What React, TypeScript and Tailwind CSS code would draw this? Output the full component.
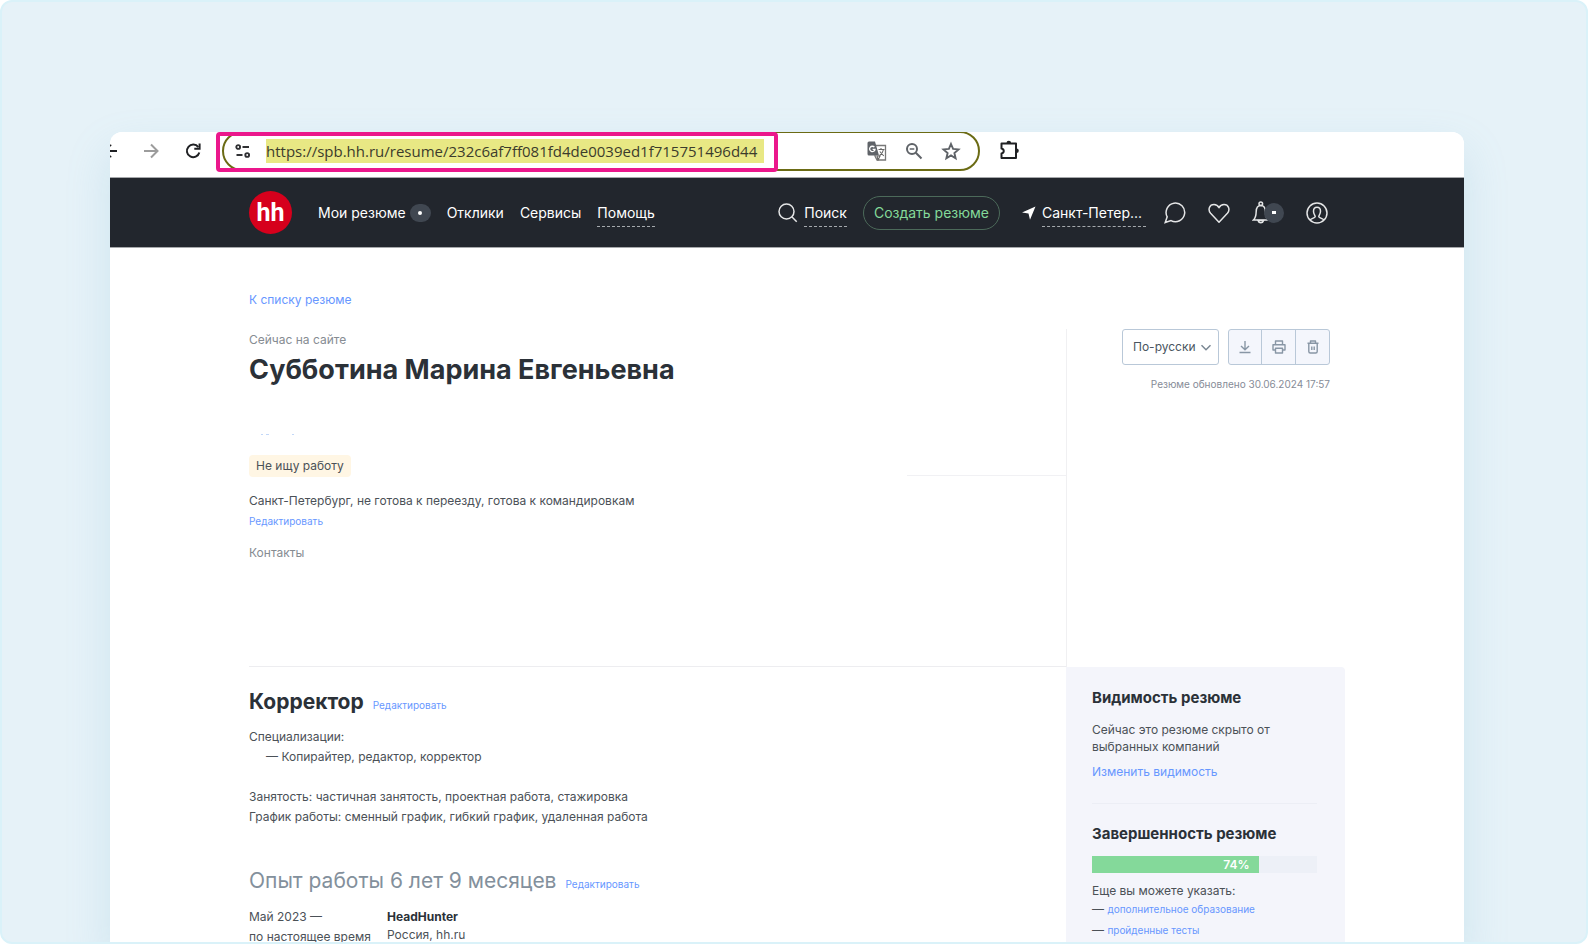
import { ReactNode } from "react"

const missing = ["дополнительное образование", "пройденные тесты"]

function EditLink() {
    return <a href="#edit" className="text-[10px] leading-4 text-[#6797ff]">Редактировать</a>
}

function BrowserBar() {
    return (
        <div className="relative flex h-[45px] shrink-0 items-start bg-white">
            <div className="flex h-[37px] w-28 shrink-0 items-center text-[#202124]">
                <button aria-label="Назад" className="w-8">
                    <svg width="8" height="16" viewBox="0 0 8 16" fill="none" stroke="currentColor" strokeWidth="2">
                        <path d="M0 8h7M0 2l1 1M0 14l1-1" />
                    </svg>
                </button>
                <button aria-label="Вперёд" className="w-[41px] text-[#9c9c9c]">
                    <svg width="18" height="18" viewBox="0 0 18 18" fill="none" stroke="currentColor" strokeWidth="2">
                        <path d="M2 9h13M9 2.5L15.5 9L9 15.5" />
                    </svg>
                </button>
                <button aria-label="Обновить" className="w-8">
                    <svg width="20" height="18" viewBox="0 0 20 18" fill="none" stroke="currentColor" strokeWidth="2">
                        <path d="M15.3 5.2A6.3 6.3 0 1 0 16.3 10.5" />
                        <path d="M16.6 1.5v5.3h-5.3" />
                    </svg>
                </button>
            </div>
            <div className="-mt-px flex h-10 w-[758px] shrink-0 items-center rounded-full border-2 border-[#6b6b14] pr-[17px] pl-[11px] text-[#5f6368]">
                <svg width="16" height="14" viewBox="0 0 16 14" fill="none" stroke="#303134" strokeWidth="1.9">
                    <circle cx="3.2" cy="3" r="1.9" />
                    <path d="M7.5 3H14M1.5 11h6" />
                    <circle cx="12.2" cy="11" r="1.9" />
                </svg>
                <input
                    aria-label="Адрес страницы"
                    readOnly
                    value="https://spb.hh.ru/resume/232c6af7ff081fd4de0039ed1f715751496d44"
                    className="ml-[15px] h-6 w-[498px] bg-[#e8e884] font-['Open_Sans',sans-serif] text-[15px] text-[#3c3c2c] outline-none"
                />
                <div className="ml-auto flex items-center gap-[18px]">
                    <button aria-label="Перевести">
                        <svg width="20" height="20" viewBox="0 0 20 20">
                            <path d="M8 4.5h10.5v14.5H10l-2-4z" fill="#fff" stroke="#777" strokeWidth="1.3" />
                            <path d="M2 .5h6l4 14H2a1.5 1.5 0 0 1-1.5-1.5V2A1.5 1.5 0 0 1 2 .5z" fill="#5f6368" />
                            <path d="M7.4 6.2A2.7 2.7 0 1 0 8 8.3H5.6" fill="none" stroke="#fff" strokeWidth="1.3" />
                            <path d="M11.5 8.5h6M14 7v1.5M16.5 8.5c-.5 3-2 4.5-4 6M12.8 10.5l4 4.5M10 15l1 4 2-4z" fill="none" stroke="#666" strokeWidth="1.1" />
                        </svg>
                    </button>
                    <button aria-label="Масштаб">
                        <svg width="18" height="18" viewBox="0 0 18 18" fill="none" stroke="currentColor" strokeWidth="2">
                            <circle cx="7" cy="7" r="5" />
                            <path d="M10.8 10.8L16.5 16.5" />
                            <path d="M4.7 7h4.6" strokeWidth="1.5" />
                        </svg>
                    </button>
                    <button aria-label="Добавить в закладки">
                        <svg width="20" height="20" viewBox="0 0 20 20" fill="none" stroke="currentColor" strokeWidth="1.9">
                            <path d="M10 3l2.1 4.9 5.4.5-4.1 3.6 1.2 5.2L10 14.4l-4.6 2.8 1.2-5.2-4.1-3.6 5.4-.5z" />
                        </svg>
                    </button>
                </div>
            </div>
            <button aria-label="Расширения" className="ml-5 flex h-9 items-center">
                <svg width="20" height="20" viewBox="0 0 20 20" fill="none" stroke="#202124" strokeWidth="2" strokeLinejoin="round">
                    <path d="M1.5 3.5h14.5v14.5H1.5v-4.5c3-.6 3-4.400 0-5z" />
                    <path d="M6.500 3a2.300 2.300 0 0 1 4.600 0zM16.500 8.400a2.300 2.300 0 0 1 0 4.600z" fill="#202124" stroke="none" />
                </svg>
            </button>
            <div className="pointer-events-none absolute top-0 left-[106px] h-10 w-[562px] rounded-sm border-4 border-[#eb178c]" />
        </div>
    )
}

function NavLink({ children, dashed }: { children: ReactNode, dashed?: boolean }) {
    return (
        <a href="#nav" className={dashed ? "border-b border-dashed border-[#a5a9ad] pt-1 pb-[3px]" : "pt-1 pb-1"}>
            {children}
        </a>
    )
}

function SiteHeader() {
    return (
        <header className="flex h-[71px] shrink-0 items-center border-t border-b border-[#a6a8ab] bg-[#22262d] pr-[136px] pl-[139px] text-sm leading-5 text-white">
            <a href="#home" aria-label="hh" className="flex h-[43px] w-[43px] items-center justify-center rounded-full bg-[#d6001c] font-['Roboto',sans-serif] text-[25px] leading-none font-bold">
                hh
            </a>
            <nav className="ml-[26px] flex items-center gap-4">
                <div className="flex items-center gap-1">
                    <NavLink>Мои резюме</NavLink>
                    <span className="flex h-[18px] w-[21px] items-center justify-center rounded-full bg-[#404751]">
                        <span className="h-1 w-1 rounded-full bg-white" />
                    </span>
                </div>
                <NavLink>Отклики</NavLink>
                <NavLink>Сервисы</NavLink>
                <NavLink dashed>Помощь</NavLink>
            </nav>
            <div className="ml-auto flex items-center">
                <svg width="20" height="20" viewBox="0 0 20 20" fill="none" stroke="#e4e5e6" strokeWidth="1.5" className="mr-1.5">
                    <circle cx="8.5" cy="8.5" r="7.5" />
                    <path d="M13.8 13.8L18.7 18.7" />
                </svg>
                <NavLink dashed>Поиск</NavLink>
                <button className="ml-4 h-[34px] rounded-full border border-[#4c6a5a] px-2.5 text-[#84d99a]">Создать резюме</button>
                <svg width="14" height="14" viewBox="0 0 14 14" fill="#fff" className="mr-1.5 ml-[22px]">
                    <path d="M13.5.5L0 6.5l6.5.9L8 13.8z" />
                </svg>
                <div className="flex w-[104px] flex-col">
                    <NavLink dashed>Санкт-Петер...</NavLink>
                </div>
                <div className="ml-[18px] flex items-center gap-[22px]">
                    <button aria-label="Сообщения">
                        <svg width="22" height="22" viewBox="0 0 22 22" fill="none" stroke="#e4e5e6" strokeWidth="1.5">
                            <path d="M3.2 14.8A9.300 9.300 0 1 1 7 18.600L1.200 20.500z" />
                        </svg>
                    </button>
                    <button aria-label="Избранное">
                        <svg width="22" height="22" viewBox="0 0 22 22" fill="none" stroke="#e4e5e6" strokeWidth="1.5" strokeLinejoin="round">
                            <path d="M11 20.3L2.6 11.3C-.5 7.5 1.5 2.5 6 2.5c2.3 0 4 1.2 5 3.3 1-2.1 2.700-3.300 5-3.300 4.500 0 6.500 5 3.400 8.800z" />
                        </svg>
                    </button>
                    <button aria-label="Уведомления" className="flex items-center">
                        <svg width="16" height="24" viewBox="0 0 16 24" fill="none" stroke="#e4e5e6" strokeWidth="1.5" className="-mr-1">
                            <circle cx="8.8" cy="2.700" r="1.800" />
                            <path d="M8.800 4.500c-3.200 0-4.500 2.500-4.600 6-.1 4-.5 6.500-2.800 8.500h14.600c-2.300-2-2.500-4.500-2.600-8.500-.1-3.500-1.400-6-4.600-6z" />
                            <path d="M6 19.500a2.900 2.900 0 0 0 5.600 0z" />
                        </svg>
                        <span className="z-10 flex h-5 w-5 items-center justify-center rounded-full bg-[#404751]">
                            <span className="h-[3px] w-1 bg-white" />
                        </span>
                    </button>
                    <button aria-label="Профиль">
                        <svg width="22" height="22" viewBox="0 0 22 22" fill="none" stroke="#e4e5e6" strokeWidth="1.500">
                            <circle cx="11" cy="11" r="10" />
                            <path d="M4 18c1-1.500 4.600-1.800 5.200-3.200.3-1.500-1.700-2-1.700-5.600C7.500 6.500 8.500 5.200 11 5.200s3.500 1.300 3.500 4c0 3.600-2 4.100-1.700 5.600.6 1.400 4.200 1.700 5.200 3.200" />
                        </svg>
                    </button>
                </div>
            </div>
        </header>
    )
}

function ResumeTools() {
    return (
        <div className="flex w-[279px] shrink-0 flex-col items-end border-l border-[#f0f0f2] pr-[15px]">
            <div className="flex gap-[9px]">
                <div className="relative flex">
                    <select aria-label="Язык резюме" className="h-9 w-[97px] appearance-none rounded-[3px] border border-[#b9c8d8] bg-white pl-2.5 text-xs text-[#4a5560]">
                        <option>По-русски</option>
                    </select>
                    <svg width="12" height="8" viewBox="0 0 12 8" fill="none" stroke="#7a8793" strokeWidth="1.5" className="pointer-events-none absolute top-[15px] right-[7px]">
                        <path d="M1.5 1.2L6 5.7l4.5-4.5" />
                    </svg>
                </div>
                <div className="flex h-9 divide-x divide-[#b9c8d8] rounded-[3px] border border-[#b9c8d8] bg-[#f4f6fc] text-[#8896a5]">
                    <button aria-label="Скачать" className="flex w-[33px] items-center justify-center">
                        <svg width="14" height="14" viewBox="0 0 14 14" fill="none" stroke="currentColor" strokeWidth="1.4">
                            <path d="M7 1v8.5M3 6l4 3.8L11 6M1.5 12.5h11" />
                        </svg>
                    </button>
                    <button aria-label="Печать" className="flex w-[34px] items-center justify-center">
                        <svg width="14" height="14" viewBox="0 0 14 14" fill="none" stroke="currentColor" strokeWidth="1.4" strokeLinejoin="round">
                            <path d="M3.5 4.5V1h7v3.5M3.5 10H1V4.7h12V10h-2.5M3.5 8.3h7V13h-7z" />
                        </svg>
                    </button>
                    <button aria-label="Удалить" className="flex w-[33px] items-center justify-center">
                        <svg width="14" height="14" viewBox="0 0 14 14" fill="none" stroke="currentColor" strokeWidth="1.4" strokeLinejoin="round">
                            <path d="M1.5 3.2h11M4.5 3V1h5v2M2.8 3.5v8a1.5 1.5 0 0 0 1.5 1.5h5.4a1.5 1.5 0 0 0 1.5-1.5v-8M5.8 6.5V10M8.2 6.5V10" />
                        </svg>
                    </button>
                </div>
            </div>
            <p className="mt-[11px] text-[10px] leading-4 text-[#868c97]">Резюме обновлено 30.06.2024 17:57</p>
        </div>
    )
}

function Sidebar() {
    return (
        <aside className="w-[279px] shrink-0 rounded-tr-sm bg-[#f4f5fb] pt-[19px] pr-7 pl-[26px] text-[#4b5157]">
            <h3 className="text-[15px] leading-6 font-bold text-[#2b3138]">Видимость резюме</h3>
            <p className="mt-[11px] leading-[17px]">Сейчас это резюме скрыто от выбранных компаний</p>
            <a href="#visibility" className="mt-2 block leading-[18px] text-[#6797ff]">Изменить видимость</a>
            <hr className="mt-[22px] border-[#eceef5]" />
            <h3 className="mt-[18px] text-[15px] leading-6 font-bold text-[#2b3138]">Завершенность резюме</h3>
            <div className="mt-2.5 h-[17px] bg-[#edf0f7]">
                <div className="h-full bg-[#84d99a] pr-[9px] text-right leading-[17px] font-semibold text-white" style={{ width: "74%" }}>74%</div>
            </div>
            <p className="mt-[9px] leading-[18px]">Еще вы можете указать:</p>
            <ul className="flex flex-col gap-[3px] leading-[18px]">
                {missing.map(item => (
                    <li key={item}>— <a href="#add" className="text-[10px] text-[#6797ff]">{item}</a></li>
                ))}
            </ul>
        </aside>
    )
}

function Resume() {
    return (
        <main className="flex grow flex-col pt-[42px] pr-[119px] pl-[139px] text-xs leading-5 text-[#4b5157]">
            <a href="#list" className="self-start text-[#6797ff]">К списку резюме</a>
            <div className="mt-[19px] flex h-[338px] shrink-0">
                <div className="flex grow justify-between border-b border-[#ededf0]">
                    <div className="pt-0.5">
                        <p className="leading-[18px] text-[#868c92]">Сейчас на сайте</p>
                        <h1 className="mt-[3px] text-[27px] leading-9 font-bold text-[#2b3138]">Субботина Марина Евгеньевна</h1>
                        <svg width="48" height="2" viewBox="0 0 48 2" className="mt-[45px]" stroke="#c3d8f8" strokeWidth="1">
                            <path d="M12 1.5h2M17 1.5h3M43 1.5h2" />
                        </svg>
                        <span className="mt-5 block w-fit rounded-sm bg-[#fff6e4] px-[7px] leading-[22px]">Не ищу работу</span>
                        <p className="mt-3.5">Санкт-Петербург, не готова к переезду, готова к командировкам</p>
                        <div className="mt-0.5 flex"><EditLink /></div>
                        <p className="mt-3.5 text-[#868c92]">Контакты</p>
                    </div>
                    <div className="h-[147px] w-[159px] border-b border-[#f1f1f4]" />
                </div>
                <ResumeTools />
            </div>
            <div className="flex grow">
                <div className="grow pt-5">
                    <div className="flex items-baseline gap-[9px]">
                        <h2 className="text-[21px] leading-[30px] font-bold text-[#2b3138]">Корректор</h2>
                        <EditLink />
                    </div>
                    <p className="mt-2.5">Специализации:</p>
                    <ul className="pl-[17px]">
                        <li>— Копирайтер, редактор, корректор</li>
                    </ul>
                    <p className="mt-5">Занятость: частичная занятость, проектная работа, стажировка</p>
                    <p>График работы: сменный график, гибкий график, удаленная работа</p>
                    <div className="mt-[38px] flex items-baseline gap-[9px]">
                        <h2 className="text-[21px] leading-8 text-[#83909c]">Опыт работы 6 лет 9 месяцев</h2>
                        <EditLink />
                    </div>
                    <div className="mt-2.5 flex">
                        <p className="w-[138px]">Май 2023 —<br />по настоящее время</p>
                        <div className="pt-px leading-[18px]">
                            <h4 className="font-bold text-[#2b3138]">HeadHunter</h4>
                            <p>Россия, hh.ru</p>
                        </div>
                    </div>
                </div>
                <Sidebar />
            </div>
        </main>
    )
}

function App() {
    return (
        <div className="flex h-screen flex-col overflow-hidden rounded-xl border-2 border-[#daf2f9] bg-[#e6f2f8] pt-[130px] pr-[122px] pl-[108px] font-['Inter',sans-serif]">
            <div className="flex grow flex-col rounded-t-xl bg-white shadow-[0_20px_44px_rgba(120,180,210,0.22)]">
                <div className="flex min-h-0 grow flex-col overflow-hidden rounded-t-xl">
                    <BrowserBar />
                    <SiteHeader />
                    <Resume />
                </div>
            </div>
        </div>
    )
}

export default App
